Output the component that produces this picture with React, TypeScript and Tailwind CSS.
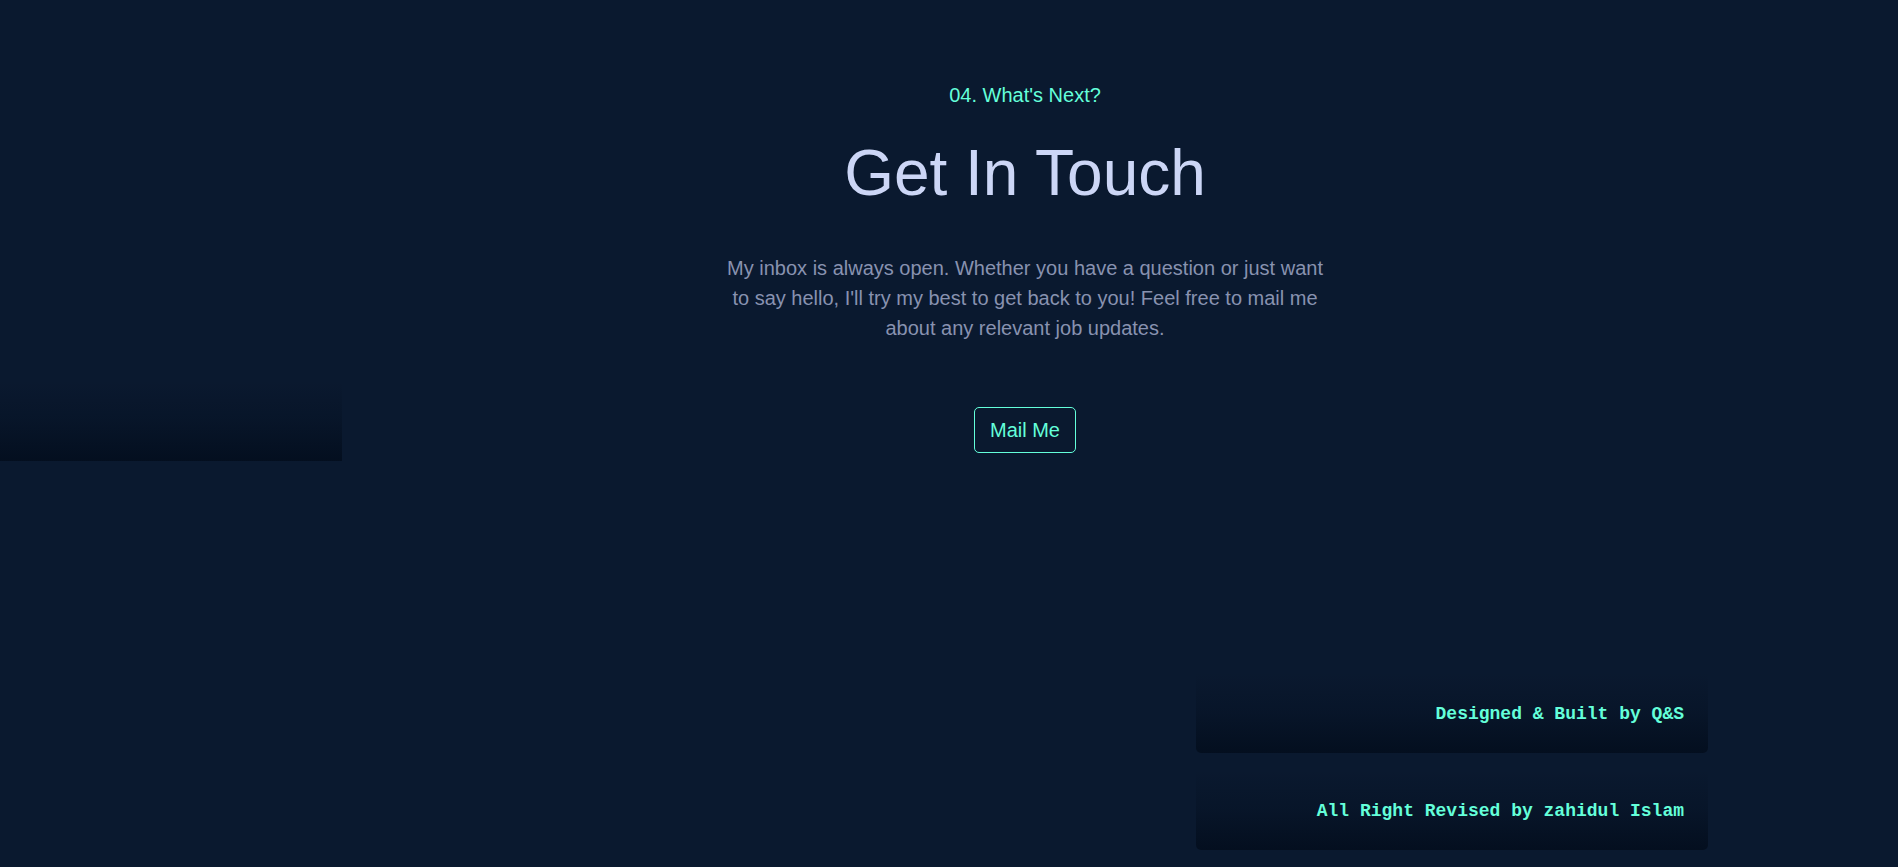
const footerLines = ["Designed & Built by Q&S", "All Right Revised by zahidul Islam"];

export default function App() {
  return (
    <div className="min-h-[867px] w-full bg-[#0a192f] flex font-['Liberation_Sans',Arial,sans-serif]">
      {/* left rail */}
      <aside className="w-[342px] shrink-0 pt-[381px]">
        <div className="h-20 w-full bg-gradient-to-b from-transparent via-[#020c1b]/30 to-[#020c1b]/80" />
      </aside>

      <main className="flex-1 flex flex-col">
        <section className="flex flex-col items-center text-center pt-[84px]">
          <p className="text-[20px] leading-[23px] text-[#64ffda]">04. What's Next?</p>
          <h2 className="mt-[31px] text-[64px] leading-[70px] text-[#ccd6f6]">Get In Touch</h2>
          <p className="mt-[45px] max-w-[600px] text-[20px] leading-[30px] text-[#8892b0]">
            My inbox is always open. Whether you have a question or just want to say hello, I'll try my
            best to get back to you! Feel free to mail me about any relevant job updates.
          </p>
          <a
            href="#"
            className="mt-[64px] inline-flex h-[46px] items-center rounded-[5px] border border-[#64ffda] px-[15px] text-[20px] text-[#64ffda]"
          >
            Mail Me
          </a>
        </section>

        <footer className="mt-[220px] flex flex-col items-end gap-[17px]">
          {footerLines.map((line) => (
            <div
              key={line}
              className="flex h-20 w-[512px] items-center justify-end rounded-b-[5px] bg-gradient-to-b from-transparent via-[#020c1b]/30 to-[#020c1b]/80 px-6 pt-[2px]"
            >
              <span className="font-['Liberation_Mono','Courier_New',monospace] text-[18px] font-bold text-[#64ffda]">
                {line}
              </span>
            </div>
          ))}
        </footer>
      </main>

      {/* right rail */}
      <aside className="w-[190px] shrink-0" />
    </div>
  );
}
